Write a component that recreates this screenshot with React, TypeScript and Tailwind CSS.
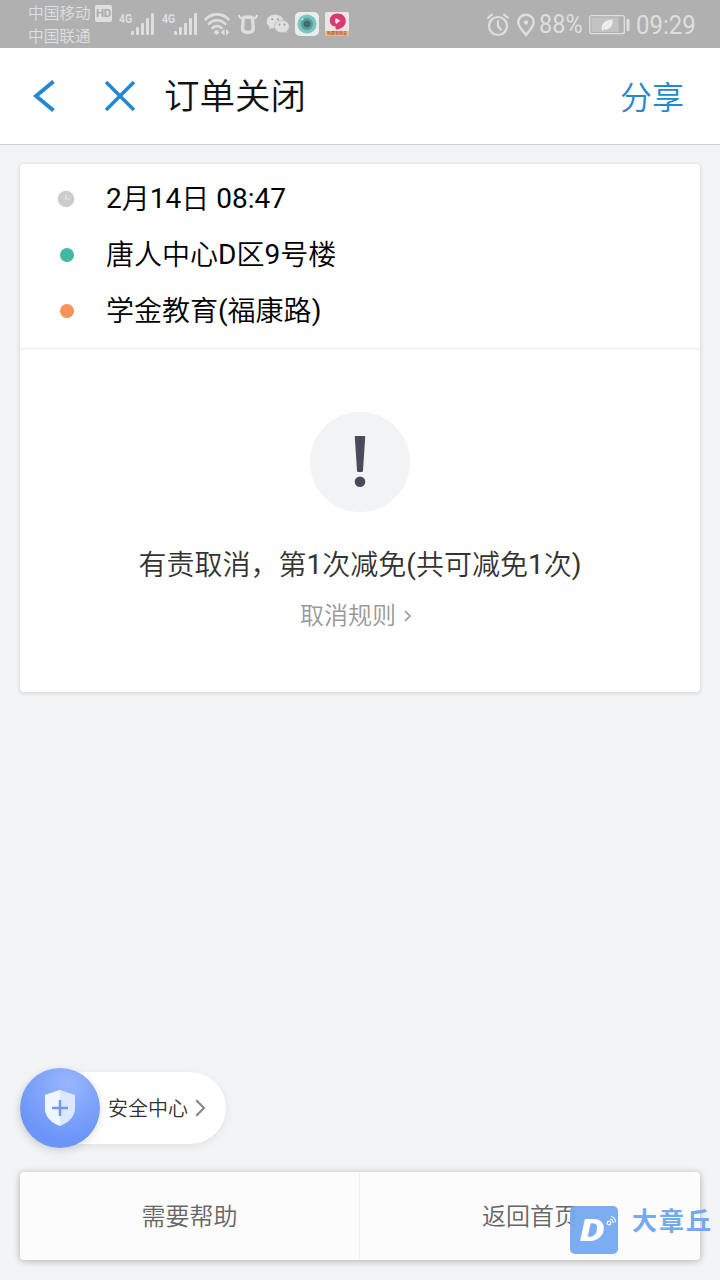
import React from 'react';

const FONT = 'font-[Roboto,"Noto_Sans_CJK_SC",sans-serif]';

const Signal: React.FC = () => (
  <div className="flex h-6 w-9 shrink-0">
    <span className="w-3 origin-left scale-x-80 font-[Roboto,sans-serif] text-[13px] leading-[13px] font-bold">4G</span>
    <svg width="24" height="24" viewBox="0 0 24 24" fill="currentColor">
      <rect x="0" y="19" width="3" height="4" rx="1" />
      <rect x="5" y="15" width="3" height="8" rx="1" />
      <rect x="10" y="11" width="3" height="12" rx="1" />
      <rect x="15" y="6" width="3" height="17" rx="1" />
      <rect x="20" y="1" width="3" height="22" rx="1" />
    </svg>
  </div>
);

const WifiIcon: React.FC = () => (
  <svg className="ml-1.5 shrink-0" width="26" height="24" viewBox="0 0 26 24" fill="none" stroke="currentColor" strokeWidth="2.6" strokeLinecap="round">
    <path d="M1.5 7.3C8 .7 18 .7 24.5 7.3" />
    <path d="M4.8 11.8c4.8-4.8 11.6-4.8 16.4 0" />
    <path d="M8.5 16c2.6-2.5 6.4-2.5 9 0" />
    <circle cx="12.5" cy="20.3" r="2.3" fill="currentColor" stroke="none" />
    <path d="M20.5 17v6.5L16.8 20.2zM22 17v6.5l3.7-3.3z" fill="currentColor" stroke="none" />
  </svg>
);

const BullIcon: React.FC = () => (
  <svg className="ml-2 shrink-0" width="20" height="24" viewBox="0 0 20 24" fill="none" stroke="currentColor" strokeLinecap="round" strokeLinejoin="round">
    <path d="M1 3.800c.4 1.800 1.500 2.400 3 2.200M18.800 3.800c-.4 1.800-1.500 2.400-3 2.200" strokeWidth="2.200" />
    <path d="M7.500 5.200h4.800q2.500 0 2.500 2.500v3.500l.5 4.800c.3 3-2 4.500-5.400 4.500s-5.700-1.500-5.400-4.500l.5-4.800V7.700q0-2.500 2.500-2.500z" strokeWidth="3.400" />
  </svg>
);

const WechatIcon: React.FC = () => (
  <svg className="ml-2 shrink-0" width="24" height="24" viewBox="0 0 24 24">
    <path d="M9 2.500C4.300 2.500.7 5.600.7 9.500c0 2.200 1.200 4.100 3 5.400L3 17.500l3-1.500c1 .3 2 .4 3 .4 4.700 0 8.400-3.100 8.400-7S13.700 2.500 9 2.500z" fill="#dfdfdf" />
    <path d="M16 8.300c-4.200 0-7.400 2.700-7.400 6.200s3.200 6.200 7.400 6.200c.9 0 1.700-.1 2.500-.4l2.600 1.400-.6-2.300c1.700-1.200 2.800-2.900 2.800-4.900 0-3.500-3.200-6.200-7.300-6.200z" fill="#dfdfdf" stroke="#b0b0b0" strokeWidth=".7" />
    <g fill="#999">
      <circle cx="6.200" cy="7.300" r="1" />
      <circle cx="11.800" cy="7.300" r="1" />
      <circle cx="13.500" cy="12.500" r=".9" />
      <circle cx="18.500" cy="12.500" r=".9" />
    </g>
  </svg>
);

const CameraApp: React.FC = () => (
  <svg className="ml-[5px] shrink-0" width="24" height="24" viewBox="0 0 24 24">
    <rect width="24" height="24" rx="5" fill="#e9eeec" />
    <circle cx="12" cy="12" r="9.600" fill="#7cc4bf" />
    <circle cx="12" cy="12" r="6" fill="#4ba19f" stroke="#62b0ac" strokeWidth=".8" />
    <circle cx="12" cy="12" r="3.300" fill="#456a6d" />
    <circle cx="12" cy="12" r="1.200" fill="#8b5960" />
    <circle cx="7.500" cy="7.200" r="1" fill="#c7e6e4" />
  </svg>
);

const VideoApp: React.FC = () => (
  <div className="relative ml-1.5 h-6 w-6 shrink-0">
    <svg width="24" height="24" viewBox="0 0 24 24">
      <rect width="24" height="24" rx="2" fill="#ece5e6" />
      <path d="M5 10.500C3.800 4.500 8 1.500 12.500 1.500c5 0 8.300 3.300 8.300 7.500 0 4.700-3.900 8-8.800 8.500-1.500.1-1.800-1.500-1.300-3-2 .2-5-1.200-5.700-4z" fill="#d93b70" />
      <path d="M10.800 6l4.600 2.800-4.200 3.300c-1.300-1.800-1.400-4.400-.4-6.100z" fill="#f3dfe5" />
      <rect y="19" width="24" height="5" fill="#eeb98a" />
    </svg>
    <span className="absolute bottom-0 left-0 w-6 text-center text-[4px] leading-[5px] font-bold text-[#b35b3c]">听歌有惊喜</span>
  </div>
);

const AlarmIcon: React.FC = () => (
  <svg className="-ml-px shrink-0" width="22" height="24" viewBox="0 0 22 24" fill="none" stroke="currentColor" strokeWidth="2.200" strokeLinecap="round">
    <circle cx="11" cy="13" r="9" />
    <path d="M11 8v5.300l3 3.200" />
    <path d="M1.200 4.800l3.600-3.200M20.800 4.800l-3.600-3.200" />
  </svg>
);

const PinIcon: React.FC = () => (
  <svg className="ml-2 shrink-0" width="18" height="24" viewBox="0 0 18 24" fill="none" stroke="currentColor" strokeWidth="2.400">
    <path d="M9 22C6 18 1.300 13.500 1.300 9.200 1.300 4.900 4.700 1.800 9 1.800s7.700 3.100 7.700 7.400C16.700 13.500 12 18 9 22z" />
    <circle cx="9" cy="9.500" r="2.200" fill="currentColor" stroke="none" />
  </svg>
);

const BatteryIcon: React.FC = () => (
  <svg className="ml-[7px] shrink-0" width="41" height="20" viewBox="0 0 41 20">
    <rect x=".7" y=".7" width="34.600" height="18" rx="2" fill="none" stroke="#dedede" strokeWidth="1.300" />
    <rect x="2.500" y="2.500" width="27" height="14.500" fill="#c3c3c3" />
    <path d="M13 15.500c-1.500-6 2.500-10.500 10.500-11 .5 7-3 11-8.500 9.700l-1 1.800z" fill="#eee" />
    <path d="M14 14.500c2-3.500 3.800-5 6-6.500" fill="none" stroke="#d4d4d4" strokeWidth=".7" />
    <rect x="37.500" y="4" width="3" height="12" rx="1" fill="#dedede" />
  </svg>
);

const StatusBar: React.FC = () => (
  <header className="flex h-12 items-start bg-[#b0b0b0] pl-7 text-[#dfdfdf]">
    <div className="w-[67px] pt-[2px] text-[15.700px] leading-[23px] font-[350]">
      <div>中国移动</div>
      <div>中国联通</div>
    </div>
    <div className="mt-[5px] mr-[7px] h-[17px] w-[17px] shrink-0 rounded-[2px] bg-[#dfdfdf] text-center text-[11.500px] leading-[17px] font-bold tracking-tight text-[#aaa]">HD</div>
    <div className="flex items-start gap-[7px] pt-3">
      <Signal />
      <Signal />
    </div>
    <div className="flex pt-3">
      <WifiIcon />
      <BullIcon />
      <WechatIcon />
      <CameraApp />
      <VideoApp />
    </div>
    <div className="ml-auto flex h-[50px] items-center pr-6">
      <AlarmIcon />
      <PinIcon />
      <span className="ml-1 w-[43px] origin-left scale-x-94 text-[25px]">88%</span>
      <BatteryIcon />
      <span className="ml-[6px] w-[60px] origin-left scale-x-94 text-[25.500px]">09:29</span>
    </div>
  </header>
);

const NavBar: React.FC = () => (
  <nav className="flex h-[97px] items-center border-b border-[#cfcfd0] bg-white pr-9 pl-[33px]">
    <svg width="22" height="32" viewBox="0 0 22 32" fill="none" stroke="#2588cf" strokeWidth="4">
      <path d="M20.500 1.500L3 16l17.500 14.500" />
    </svg>
    <svg className="ml-[49px]" width="32" height="32" viewBox="0 0 32 32" fill="none" stroke="#2588cf" strokeWidth="3.600">
      <path d="M2 2l28 28M30 2L2 30" />
    </svg>
    <h1 className="ml-7 pt-[3px] text-[35.500px] leading-none font-[350] text-[#111]">订单关闭</h1>
    <span className="ml-auto pt-[3px] text-[32px] leading-none font-[350] text-[#2588cf]">分享</span>
  </nav>
);

const Han: React.FC<{ children: React.ReactNode }> = ({ children }) => (
  <span className="align-[-1px] font-[350]">{children}</span>
);

const TripInfo: React.FC = () => (
  <div className="border-b border-[#e9ebed] pt-[7px] pb-[9px] text-[28px] text-black">
    <div className="flex h-14 items-center">
      <svg className="ml-[37px] mr-[31px]" width="18" height="18" viewBox="0 0 18 18" fill="none">
        <circle cx="9" cy="9" r="8.300" fill="#ccc" />
        <path d="M9 4.500V9h4" stroke="#e4e4e4" strokeWidth="1.200" />
      </svg>
      <span>2<Han>月</Han>14<Han>日</Han> 08:47</span>
    </div>
    <div className="flex h-14 items-center">
      <i className="mr-8 ml-10 h-3.5 w-3.5 rounded-full bg-[#43b79f]" />
      <span><Han>唐人中心</Han>D<Han>区</Han>9<Han>号楼</Han></span>
    </div>
    <div className="flex h-14 items-center">
      <i className="mr-8 ml-10 h-3.5 w-3.5 rounded-full bg-[#f8915a]" />
      <span><Han>学金教育</Han>(<Han>福康路</Han>)</span>
    </div>
  </div>
);

const CancelNotice: React.FC = () => (
  <div className="flex flex-col items-center pt-[63px]">
    <svg width="100" height="100" viewBox="0 0 100 100" fill="#4a4a5c">
      <circle cx="50" cy="50" r="50" fill="#f2f3f5" />
      <path d="M45.800 24h8.400q1.100 0 1 1.100L53 58.500q-.1 1.500-1.400 1.500h-3.200q-1.300 0-1.400-1.500l-2.200-33.400q-.1-1.100 1-1.100z" />
      <circle cx="50" cy="69.700" r="5.300" />
    </svg>
    <p className="mt-[33px] text-[28px] leading-10 whitespace-nowrap text-[#333]">
      <Han>有责取消，第</Han>1<Han>次减免</Han>(<Han>共可减免</Han>1<Han>次</Han>)
    </p>
    <a className="mt-[14px] flex items-center pr-2 text-[24px] leading-8 font-[350] text-[#999]">
      取消规则
      <svg className="ml-2" width="8" height="12" viewBox="0 0 8 12" fill="none" stroke="#999" strokeWidth="1.600">
        <path d="M1 1l5 5-5 5" />
      </svg>
    </a>
  </div>
);

const SafetyCenter: React.FC = () => (
  <button className="flex h-[72px] w-[206px] items-center rounded-full bg-white text-left shadow-[0_2px_8px_rgba(0,0,0,0.07)]">
    <span className="flex h-20 w-20 shrink-0 items-center justify-center rounded-full bg-[radial-gradient(circle_at_60%_20%,#98b6fc,#6b95f8_70%)] shadow-[0_3px_10px_rgba(0,0,0,0.12)]">
      <svg width="32" height="38" viewBox="0 0 32 38">
        <path d="M16 1l15 5v13c0 9-6.500 14.500-15 18C7.500 33.500 1 28 1 19V6z" fill="#dce8ff" />
        <path d="M16 1L1 6v13c0 9 6.500 14.500 15 18z" fill="#f0f6ff" />
        <path d="M8 19h16M16 11v16" stroke="#6f99ef" strokeWidth="2.500" />
      </svg>
    </span>
    <span className="ml-2 pt-0.5 text-[20px] font-[350] text-[#333]">安全中心</span>
    <svg className="ml-[7px]" width="11" height="18" viewBox="0 0 11 18" fill="none" stroke="#888" strokeWidth="2.200">
      <path d="M1.200 1.200L9 9l-7.800 7.800" />
    </svg>
  </button>
);

const Watermark: React.FC = () => (
  <div className="absolute top-[1206px] left-[570px] flex text-[#75a8f1]">
    <div className="relative h-12 w-12 rounded-[5px] bg-[#75a8f1]/95">
      <span className="absolute top-[9px] left-[10px] origin-left scale-x-125 font-[Roboto,sans-serif] text-[31px] leading-8 font-black text-white italic">D</span>
      <svg className="absolute top-[9px] left-[36px]" width="12" height="12" viewBox="0 0 12 12" fill="none" stroke="#fff" strokeWidth="1.200">
        <circle cx="3" cy="8" r="1.800" />
        <path d="M4 4c2 .3 3 2 3 4M5 1.500c3 .5 4.500 3 4.300 6" />
      </svg>
    </div>
    <span className="ml-[14px] pt-px text-[25px] leading-[30px] font-bold tracking-[2px]">大章丘</span>
  </div>
);

export default function App() {
  return (
    <div className={`${FONT} relative flex h-[1280px] w-[720px] flex-col overflow-hidden bg-[#f2f3f5]`} lang="zh-CN">
      <StatusBar />
      <NavBar />
      <main className="flex flex-1 flex-col items-start px-5 pt-[19px] pb-5">
        <section className="h-[528px] w-full rounded-[4px] bg-white shadow-[0_1px_4px_rgba(0,0,0,0.14)]">
          <TripInfo />
          <CancelNotice />
        </section>
        <div className="mt-auto mb-7">
          <SafetyCenter />
        </div>
        <div className="grid h-[88px] w-full shrink-0 grid-cols-2 rounded-[4px] bg-[#fcfcfc] text-[24px] font-[350] text-[#666] shadow-[0_1px_7px_rgba(0,0,0,0.28)]">
          <button className="border-r border-[#f0f0f0] pt-px">需要帮助</button>
          <button className="pt-px">返回首页</button>
        </div>
      </main>
      <Watermark />
    </div>
  );
}
